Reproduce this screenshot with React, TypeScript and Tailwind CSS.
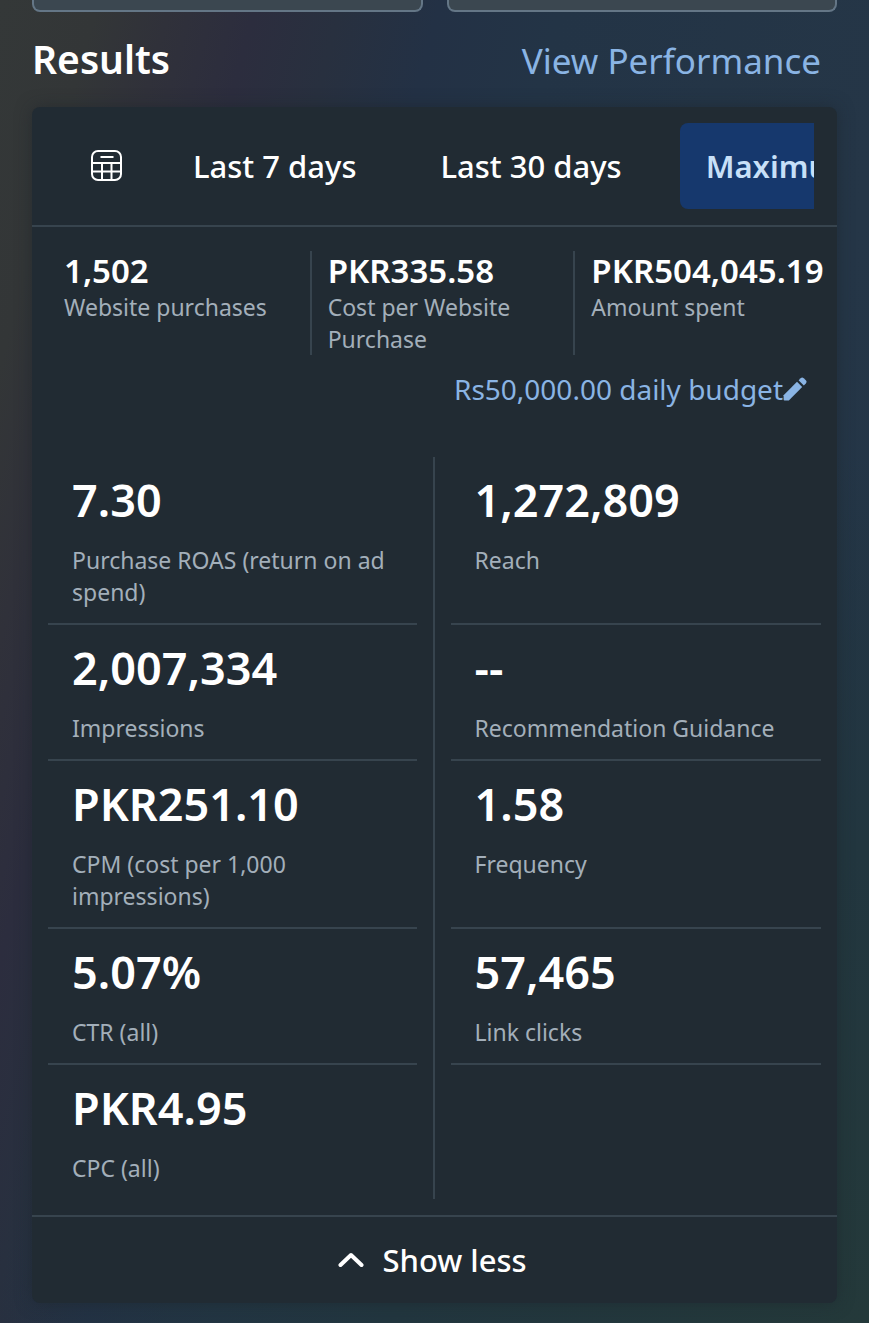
import { useState } from "react";

type Metric = { value: string; label: string };

const ranges = ["Last 7 days", "Last 30 days", "Maximum"];

const summary: Metric[] = [
  { value: "1,502", label: "Website purchases" },
  { value: "PKR335.58", label: "Cost per Website Purchase" },
  { value: "PKR504,045.19", label: "Amount spent" },
];

const metrics: (Metric | null)[] = [
  { value: "7.30", label: "Purchase ROAS (return on ad spend)" },
  { value: "1,272,809", label: "Reach" },
  { value: "2,007,334", label: "Impressions" },
  { value: "--", label: "Recommendation Guidance" },
  { value: "PKR251.10", label: "CPM (cost per 1,000 impressions)" },
  { value: "1.58", label: "Frequency" },
  { value: "5.07%", label: "CTR (all)" },
  { value: "57,465", label: "Link clicks" },
  { value: "PKR4.95", label: "CPC (all)" },
  null,
];

function CalendarIcon() {
  return (
    <svg
      className="size-8"
      viewBox="0 0 32 32"
      fill="none"
      stroke="currentColor"
      strokeWidth="2"
      aria-hidden="true"
    >
      <rect x="1" y="1" width="29" height="29" rx="6" />
      <path d="M9.500 7h13M1 13h29M1 21.500h29M11 13v17M20.500 13v17" />
    </svg>
  );
}

function PencilIcon() {
  return (
    <svg className="size-6" viewBox="0 0 24 24" fill="currentColor" aria-hidden="true">
      <path d="M.6 18.2 14 4.8l5.2 5.2L5.800 23.400H1.600a1 1 0 0 1-1-1z" />
      <path d="m15.600 3.200 2-2a2.200 2.200 0 0 1 3.100 0l2.100 2.100a2.200 2.200 0 0 1 0 3.100l-2 2z" />
    </svg>
  );
}

function ChevronIcon() {
  return (
    <svg
      className="h-4 w-[26px]"
      viewBox="0 0 26 16"
      fill="none"
      stroke="currentColor"
      strokeWidth="4"
      strokeLinecap="round"
      strokeLinejoin="round"
      aria-hidden="true"
    >
      <path d="M2.500 13 13 3l10.500 10" />
    </svg>
  );
}

function RangeTabs() {
  const [active, setActive] = useState("Maximum");

  return (
    <div className="mr-[23px] flex items-center overflow-hidden py-4 pl-[33px]">
      <button type="button" aria-label="Pick dates" className="mr-[18px] shrink-0 px-[26px] text-white">
        <CalendarIcon />
      </button>
      <div className="flex gap-8">
        {ranges.map((range) => (
          <button
            key={range}
            type="button"
            onClick={() => setActive(range)}
            className={
              range === active
                ? "shrink-0 rounded-lg bg-[#16386d] px-[26px] py-[22px] text-[31px] leading-[42px] font-semibold text-[#c8e0f8]"
                : "shrink-0 rounded-lg px-[26px] py-[22px] text-[31px] leading-[42px] font-medium text-white"
            }
          >
            {range}
          </button>
        ))}
      </div>
    </div>
  );
}

function MetricCell({ metric, left, last }: { metric: Metric | null; left: boolean; last: boolean }) {
  return (
    <div className={left ? "border-r-2 border-[#37444e] px-4" : "px-4"}>
      {metric && (
        <div
          className={
            last
              ? "flex h-full flex-col px-6 py-[15px]"
              : "flex h-full flex-col border-b-2 border-[#37444e] px-6 py-[15px]"
          }
        >
          <dd className="text-[45px] leading-[56px] font-semibold text-white">{metric.value}</dd>
          <dt className="mt-4 text-[23px] leading-8 text-[#a3afba]">{metric.label}</dt>
        </div>
      )}
    </div>
  );
}

export default function App() {
  return (
    <main className="min-h-screen bg-[radial-gradient(circle_at_bottom_right,#24393a_0%,#22363f_30%,transparent_55%),linear-gradient(105deg,#343838_0%,#333637_8%,#30313a_14%,#2c2d3e_21%,#28303f_28%,#233145_36%,#233446_46%,#253647_75%,#213446_100%)] px-8 pb-5 font-['Noto_Sans',sans-serif]">
      <div className="grid grid-cols-2 gap-6">
        <div className="h-3 rounded-b-lg border-2 border-t-0 border-[#647686] bg-[#3b4750]" />
        <div className="h-3 rounded-b-lg border-2 border-t-0 border-[#647686] bg-[#3b4750]" />
      </div>

      <header className="flex items-baseline justify-between pt-[23px] pr-4 pb-[22px]">
        <h1 className="text-[39px] leading-[48px] font-semibold text-white">Results</h1>
        <a href="#performance" className="text-[35px] leading-[48px] text-[#8ab4e4]">
          View Performance
        </a>
      </header>

      <section className="rounded-lg bg-[#212b33] shadow-[0_0_16px_rgba(28,35,42,0.5)]">
        <RangeTabs />

        <dl className="flex border-t-2 border-[#37444e] pt-6 pl-4">
          {summary.map((item, index) => (
            <div
              key={item.label}
              className={
                index < summary.length - 1
                  ? "flex min-w-0 flex-1 flex-col border-r-2 border-[#37444e] pl-4"
                  : "flex min-w-0 flex-1 flex-col pl-4"
              }
            >
              <dd className="text-[33px] leading-10 font-semibold whitespace-nowrap text-white">
                {item.value}
              </dd>
              <dt className="text-[23px] leading-8 text-[#a3afba]">{item.label}</dt>
            </div>
          ))}
        </dl>

        <div className="mt-[14px] flex justify-end pr-[30px]">
          <button type="button" className="flex items-center text-[28px] leading-10 text-[#8ab4e4]">
            Rs50,000.00 daily budget
            <PencilIcon />
          </button>
        </div>

        <dl className="mt-12 grid grid-cols-2 pb-4">
          {metrics.map((metric, index) => (
            <MetricCell
              key={metric ? metric.label : "empty"}
              metric={metric}
              left={index % 2 === 0}
              last={index >= metrics.length - 2}
            />
          ))}
        </dl>

        <button
          type="button"
          className="flex w-full items-center justify-center gap-[18px] border-t-2 border-[#37444e] py-[22px] pr-1 text-[31px] leading-[42px] font-medium text-white"
        >
          <ChevronIcon />
          Show less
        </button>
      </section>
    </main>
  );
}
